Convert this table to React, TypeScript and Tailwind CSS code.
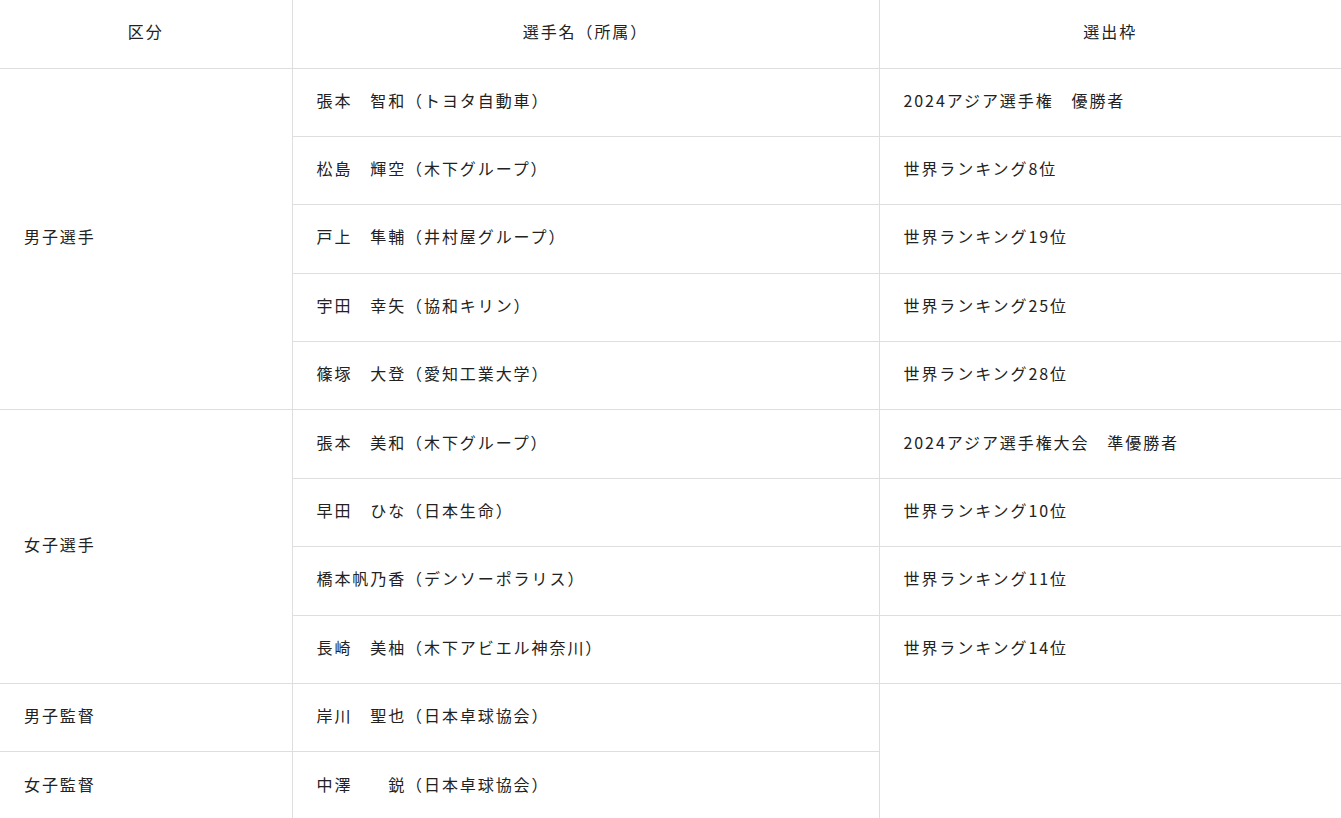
const font = { fontFamily: '"Noto Sans CJK JP", "Noto Sans", sans-serif' };

type Row = { name: string; slot?: string };

const men: Row[] = [
  { name: "張本　智和（トヨタ自動車）", slot: "2024アジア選手権　優勝者" },
  { name: "松島　輝空（木下グループ）", slot: "世界ランキング8位" },
  { name: "戸上　隼輔（井村屋グループ）", slot: "世界ランキング19位" },
  { name: "宇田　幸矢（協和キリン）", slot: "世界ランキング25位" },
  { name: "篠塚　大登（愛知工業大学）", slot: "世界ランキング28位" },
];

const women: Row[] = [
  { name: "張本　美和（木下グループ）", slot: "2024アジア選手権大会　準優勝者" },
  { name: "早田　ひな（日本生命）", slot: "世界ランキング10位" },
  { name: "橋本帆乃香（デンソーポラリス）", slot: "世界ランキング11位" },
  { name: "長崎　美柚（木下アビエル神奈川）", slot: "世界ランキング14位" },
];

const cell = "border-b border-[#dedede] px-6 pb-[5px] text-left align-middle font-normal";

function Group({ label, rows }: { label: string; rows: Row[] }) {
  return (
    <>
      {rows.map((r, i) => (
        <tr key={r.name} className="h-[68.4px]">
          {i === 0 && (
            <td rowSpan={rows.length} className={`${cell} border-r`}>
              {label}
            </td>
          )}
          <td className={`${cell} border-r`}>{r.name}</td>
          <td className={cell}>{r.slot}</td>
        </tr>
      ))}
    </>
  );
}

export default function App() {
  return (
    <div className="min-h-screen w-full overflow-hidden bg-white text-[#222]" style={font}>
      <table className="w-[1341px] table-fixed border-collapse text-[16px] tracking-[0.12em] [text-spacing-trim:space-all]">
        <colgroup>
          <col className="w-[292px]" />
          <col className="w-[587px]" />
          <col />
        </colgroup>
        <thead>
          <tr className="h-[68px]">
            <th className="border-b border-r border-[#dedede] pb-[5px] text-center font-normal">区分</th>
            <th className="border-b border-r border-[#dedede] pb-[5px] text-center font-normal">選手名（所属）</th>
            <th className="border-b border-[#dedede] pb-[5px] text-center font-normal">選出枠</th>
          </tr>
        </thead>
        <tbody>
          <Group label="男子選手" rows={men} />
          <Group label="女子選手" rows={women} />
          <tr className="h-[68.4px]">
            <td className={`${cell} border-r`}>男子監督</td>
            <td className={`${cell} border-r`}>岸川　聖也（日本卓球協会）</td>
            <td rowSpan={2} className="px-6"></td>
          </tr>
          <tr className="h-[68.4px]">
            <td className={`${cell} border-r`}>女子監督</td>
            <td className={`${cell} border-r`}>中澤　　鋭（日本卓球協会）</td>
          </tr>
        </tbody>
      </table>
    </div>
  );
}
